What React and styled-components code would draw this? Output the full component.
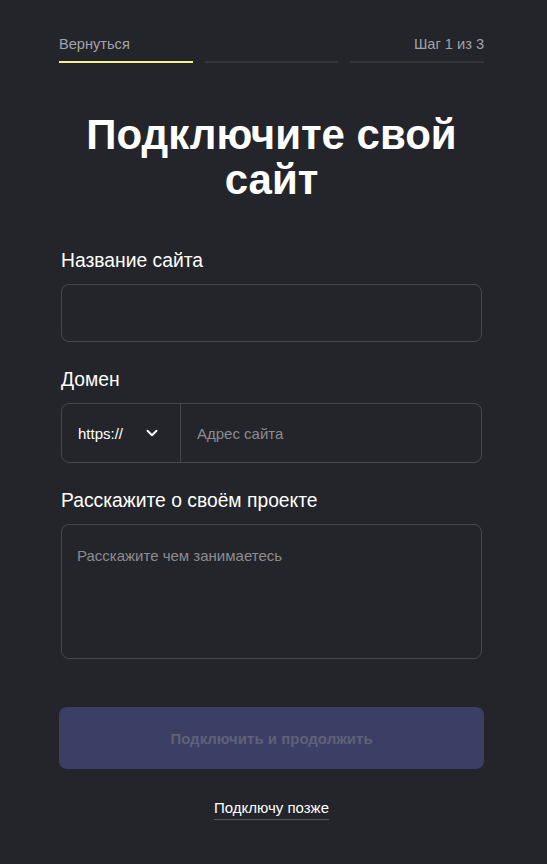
import React from "react";
import styled, { createGlobalStyle } from "styled-components";

const Global = createGlobalStyle`
  html, body { margin: 0; padding: 0; background: #24252b; }
  body { font-family: "Liberation Sans", Arial, sans-serif; color: #fff; }
  * { box-sizing: border-box; }
`;

const Page = styled.div`
  width: 547px;
  min-height: 864px;
  background: #24252b;
  padding: 35px 63px 0 59px;
`;

const TopBar = styled.div`
  display: flex;
  justify-content: space-between;
  align-items: center;
  font-size: 14.6px;
  color: #a3a3a8;
  height: 18px;
`;

const BackLink = styled.span``;
const StepText = styled.span``;

const Progress = styled.div`
  display: grid;
  grid-template-columns: repeat(3, 1fr);
  gap: 12px;
  margin-top: 8px;
`;

const Segment = styled.div`
  height: 2px;
  background: ${(p) => (p.$active ? "#f3f38c" : "#34353b")};
`;

const Title = styled.h1`
  margin: 49px 0 0;
  text-align: center;
  font-size: 42px;
  line-height: 45px;
  font-weight: 700;
  padding: 0 10px;
`;

const Form = styled.div`
  display: flex;
  flex-direction: column;
  padding: 0 2px;
  margin-top: 47px;
`;

const Field = styled.div`
  display: flex;
  flex-direction: column;
  margin-bottom: ${(p) => p.$mb ?? 26}px;
`;

const Label = styled.label`
  font-size: 19.3px;
  line-height: 24px;
  color: #fff;
  margin-bottom: 11px;
`;

const Box = styled.div`
  border: 1px solid #46474d;
  border-radius: 8px;
  height: ${(p) => p.$h}px;
  display: flex;
`;

const Select = styled.div`
  width: 119px;
  border-right: 1px solid #46474d;
  display: flex;
  align-items: center;
  justify-content: space-between;
  padding: 0 19px 0 16px;
  font-size: 15px;
  color: #fff;
`;

const Placeholder = styled.div`
  font-size: 15px;
  color: #8b8c91;
  display: flex;
  align-items: ${(p) => (p.$top ? "flex-start" : "center")};
  padding: ${(p) => (p.$top ? "22px 15px" : "0 16px")};
  flex: 1;
`;

const Button = styled.button`
  margin: 48px -2px 0;
  height: 62px;
  border: none;
  border-radius: 8px;
  background: #3b3f66;
  color: #5f6276;
  font-family: "Liberation Sans", Arial, sans-serif;
  font-weight: 700;
  font-size: 15px;
`;

const Later = styled.span`
  align-self: center;
  margin-top: 30px;
  font-size: 15px;
  color: #fff;
  padding-bottom: 3px;
  border-bottom: 1px solid #55565c;
`;

const Chevron = () => (
  <svg width="18" height="18" viewBox="0 0 24 24" fill="none" stroke="#fff" strokeWidth="2.6" strokeLinecap="round" strokeLinejoin="round">
    <path d="M6 9l6 6 6-6" />
  </svg>
);

export default function App() {
  return (
    <>
      <Global />
      <Page>
        <TopBar>
          <BackLink>Вернуться</BackLink>
          <StepText>Шаг 1 из 3</StepText>
        </TopBar>
        <Progress>
          <Segment $active />
          <Segment />
          <Segment />
        </Progress>
        <Title>Подключите свой сайт</Title>
        <Form>
          <Field>
            <Label>Название сайта</Label>
            <Box $h={58} />
          </Field>
          <Field>
            <Label>Домен</Label>
            <Box $h={60}>
              <Select>
                <span>https://</span>
                <Chevron />
              </Select>
              <Placeholder>Адрес сайта</Placeholder>
            </Box>
          </Field>
          <Field $mb={0}>
            <Label>Расскажите о своём проекте</Label>
            <Box $h={135}>
              <Placeholder $top>Расскажите чем занимаетесь</Placeholder>
            </Box>
          </Field>
          <Button>Подключить и продолжить</Button>
          <Later>Подключу позже</Later>
        </Form>
      </Page>
    </>
  );
}
